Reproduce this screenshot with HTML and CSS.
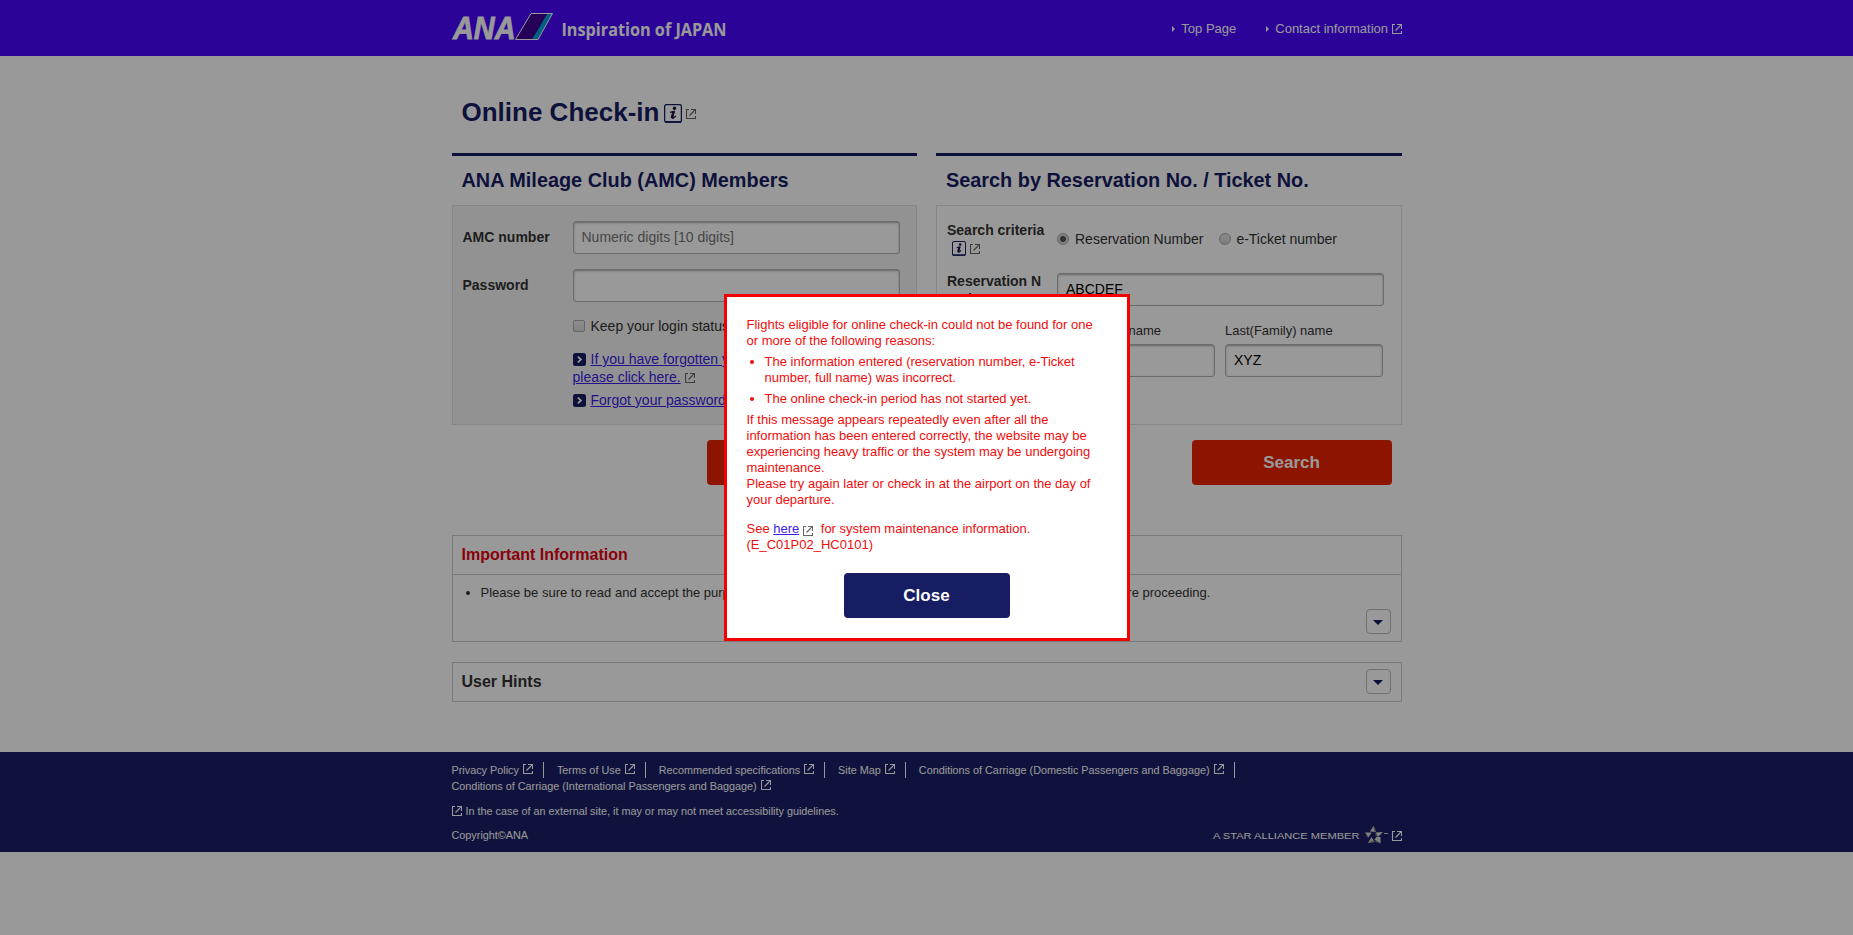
FILE: index.html
```html
<!DOCTYPE html>
<html lang="en">
<head>
<meta charset="utf-8">
<title>Online Check-in</title>
<link rel="stylesheet" href="styles.css">
</head>
<body>
<svg class="defs" width="0" height="0">
  <symbol id="ext" viewBox="0 0 10 10"><path d="M3 .5H.5v9h9V7M5 .5h4.5V5M3.5 6.5L9 1" fill="none" stroke="currentColor" stroke-width="1.15"/></symbol>
  <symbol id="chev" viewBox="0 0 13 13"><rect width="13" height="13" rx="2.500" fill="#171d63"/><path d="M4.800 3.600L8 6.500 4.800 9.400" fill="none" stroke="#fff" stroke-width="1.700"/></symbol>
  <symbol id="info" viewBox="0 0 18 19"><rect x=".6" y=".6" width="16.800" height="17.600" rx="2" fill="none" stroke="#171d63" stroke-width="1.300"/><path d="M1 17.900h16" stroke="#171d63" stroke-width="1.800"/><circle cx="10.500" cy="4.300" r="1.700" fill="#1b0f45"/><path d="M6 8.400L10.100 7.400 8.200 13.400Q8 14.800 9.400 14L11.800 12" fill="none" stroke="#1b0f45" stroke-width="1.300"/><path d="M9.700 7.300L7.800 14" stroke="#1b0f45" stroke-width="2.600"/></symbol>
</svg>
<header class="top">
  <div class="wrap top-row">
    <svg class="logo" width="280" height="56" viewBox="0 0 280 56">
      <text class="logo-ana" x="1" y="39" textLength="62.500" lengthAdjust="spacingAndGlyphs">ANA</text>
      <path d="M79 13.500H100.500L86 39.500H63.500z" fill="#3c0090"/>
      <path d="M95.500 13.500H100.500L86 39.500H80z" fill="#00a0dc"/>
      <path d="M79 13.500H100.500L86 39.500H63.500z" fill="none" stroke="#fff"/>
      <text class="logo-tag" x="109.500" y="36" textLength="165" lengthAdjust="spacingAndGlyphs">Inspiration of JAPAN</text>
    </svg>
    <nav class="top-nav">
      <a><i class="tri"></i>Top Page</a>
      <a><i class="tri"></i>Contact information<svg class="ext"><use href="#ext"/></svg></a>
    </nav>
  </div>
</header>
<main class="wrap">
  <h1>Online Check-in<svg class="info-lg"><use href="#info"/></svg><svg class="ext"><use href="#ext"/></svg></h1>
  <div class="cards">
    <section class="card">
      <h2>ANA Mileage Club (AMC) Members</h2>
      <div class="panel gray">
        <div class="row"><b class="label up">AMC number</b><div class="input ph">Numeric digits [10 digits]</div></div>
        <div class="row"><b class="label up">Password</b><div class="input"></div></div>
        <div class="indent">
          <div class="check"><i class="box"></i>Keep your login status</div>
          <p class="link"><svg class="chev"><use href="#chev"/></svg><a>If you have forgotten your AMC number,<br>please click here.</a><svg class="ext"><use href="#ext"/></svg></p>
          <p class="link"><svg class="chev"><use href="#chev"/></svg><a>Forgot your password?</a></p>
        </div>
      </div>
      <div class="btn">Log in</div>
    </section>
    <section class="card">
      <h2>Search by Reservation No. / Ticket No.</h2>
      <div class="panel">
        <div class="row"><b class="label">Search criteria<br><svg class="info-sm"><use href="#info"/></svg><svg class="ext"><use href="#ext"/></svg></b>
          <span class="radio"><i class="dot on"></i>Reservation Number</span><span class="radio"><i class="dot"></i>e-Ticket number</span></div>
        <div class="row res"><b class="label break">Reservation Number</b><div class="input">ABCDEF</div></div>
        <div class="row names"><b class="label">Name</b>
          <div class="field"><span>First(Given) name</span><div class="input"></div></div>
          <div class="field"><span>Last(Family) name</span><div class="input">XYZ</div></div></div>
      </div>
      <div class="btn">Search</div>
    </section>
  </div>
  <section class="notice">
    <h3 class="red">Important Information</h3>
    <div class="notice-body">
      <ul><li>Please be sure to read and accept the purpose of using personal information and handling of it on this page before proceeding.</li></ul>
      <span class="toggle"></span>
    </div>
  </section>
  <section class="notice hints"><h3>User Hints</h3><span class="toggle"></span></section>
</main>
<footer class="foot">
  <div class="wrap">
    <div class="foot-links">
      <a>Privacy Policy<svg class="ext"><use href="#ext"/></svg></a><a>Terms of Use<svg class="ext"><use href="#ext"/></svg></a><a>Recommended specifications<svg class="ext"><use href="#ext"/></svg></a><a>Site Map<svg class="ext"><use href="#ext"/></svg></a><a>Conditions of Carriage (Domestic Passengers and Baggage)<svg class="ext"><use href="#ext"/></svg></a><a class="last">Conditions of Carriage (International Passengers and Baggage)<svg class="ext"><use href="#ext"/></svg></a>
    </div>
    <p class="ext-note"><svg class="ext"><use href="#ext"/></svg>In the case of an external site, it may or may not meet accessibility guidelines.</p>
    <div class="foot-end"><span>Copyright©ANA</span>
      <svg class="star" width="190" height="18" viewBox="0 0 190 18">
        <text class="star-text" x="1" y="13" textLength="146.500" lengthAdjust="spacingAndGlyphs">A STAR ALLIANCE MEMBER</text>
        <g fill="#d8d8d2"><path d="M161.500 0L158 5.500 164 6z"/><path d="M153 6.500H159.500L156.500 11.500z"/><path d="M163.500 6.500L171 6 166 11z"/><path d="M159.500 11L156 17 162.500 16z"/><path d="M164.500 11H168.500V17.500L162.500 13.500z"/></g>
        <g fill="#85857f"><path d="M161.500 0L164 6 162 5.500z"/><path d="M153 6.500L156.500 11.500 155 11z"/><path d="M163.500 6.500L166 11 163.500 9.500z"/><path d="M156 17L162.500 16 160 14.500z"/><path d="M168.500 17.500L162.500 13.500 164 16z"/></g>
        <path d="M172 7.500h4" stroke="#ccc"/>
        <path d="M183 5.500H180.500v9h9v-2.500M185 5.500h4.500v4.500M183.500 11.500L189 6" fill="none" stroke="#fff" stroke-width="1.150"/>
      </svg>
    </div>
  </div>
</footer>
<div class="overlay">
  <div class="modal">
    <p>Flights eligible for online check-in could not be found for one or more of the following reasons:</p>
    <ul><li>The information entered (reservation number, e-Ticket number, full name) was incorrect.</li><li>The online check-in period has not started yet.</li></ul>
    <p>If this message appears repeatedly even after all the information has been entered correctly, the website may be experiencing heavy traffic or the system may be undergoing maintenance.<br>Please try again later or check in at the airport on the day of your departure.</p>
    <p class="see">See <a>here</a><svg class="ext"><use href="#ext"/></svg>for system maintenance information.<br>(E_C01P02_HC0101)</p>
    <div class="close">Close</div>
  </div>
</div>
</body>
</html>
```
FILE: styles.css
```css
* { box-sizing: border-box; }
body { margin: 0; background: #fff; color: #333; font: 14px/18px "Liberation Sans", Arial, sans-serif; }
h1, h2, h3, p, ul { margin: 0; padding: 0; }
.defs { display: block; }
.wrap { width: 950px; margin: 0 auto; }
.ext { width: 10px; height: 10px; color: #666; }

.top { background: #4906ff; height: 56px; color: #fff; font-size: 13px; }
.top-row { display: flex; justify-content: space-between; }
.logo { display: block; overflow: visible; }
.logo-ana { font: italic bold 31px "Liberation Sans", Arial, sans-serif; fill: #fff; stroke: #fff; stroke-width: .8px; }
.logo-tag { font: 700 18px "Open Sans", sans-serif; fill: #fff; }
.top-nav { display: flex; gap: 30px; height: 58px; align-items: center; }
.top-nav a { display: flex; align-items: center; }
.top-nav .ext { color: #fff; margin: 0 0 0 3.500px; }
.tri { border-left: 3px solid #fff; border-top: 3px solid transparent; border-bottom: 3px solid transparent; margin-right: 6px; }

h1 { height: 97px; padding: 41px 0 0 10px; font-size: 26px; line-height: 30px; color: #171d63; }
h1 .ext { margin-left: 4px; vertical-align: 2px; }
.info-lg { width: 18px; height: 19px; margin-left: 4.500px; vertical-align: -2px; }
.info-sm { width: 14px; height: 15px; margin: 0 4px 0 5px; vertical-align: -3px; }
.cards { display: flex; gap: 19px; }
.card { width: 465.500px; border-top: 3px solid #171d63; }
h2 { padding: 12px 10px 13px; font-size: 19.880px; line-height: 24px; color: #171d63; }
.panel { height: 220px; border: 1px solid #dfdfdf; padding: 15px 10px; }
.gray { background: #f3f3f3; }
.row { display: flex; align-items: center; margin-bottom: 15px; }
.label { width: 110px; flex: none; }
.up { padding-bottom: 2px; }
.label .ext { vertical-align: -1px; }
.break { word-break: break-all; padding-right: 10px; }
.input { width: 327px; height: 33px; border: 1px solid #b5b5b5; border-radius: 3px; background: #fff; box-shadow: inset 0 1px 2px #aaa; padding: 6px 8px; color: #000; }
.ph { color: #757575; }
.res .input { margin-bottom: 1px; }
.indent { margin-left: 110px; white-space: nowrap; }
.check { display: flex; align-items: center; margin-bottom: 15px; }
.box { width: 12px; height: 12px; margin-right: 6px; border: 1px solid #aaa; border-radius: 2px; background: linear-gradient(#eee, #d8d8d8); }
.link { margin-bottom: 5px; overflow: hidden; }
.link a, .see a { color: #3a1de4; text-decoration: underline; }
.link .ext { margin-left: 4px; vertical-align: -1px; }
.chev { width: 13px; height: 13px; margin-right: 5px; vertical-align: -2px; }
.radio { display: flex; align-items: center; margin-right: 16px; }
.dot { width: 12px; height: 12px; margin-right: 6px; border: 1px solid #aaa; border-radius: 50%; background: linear-gradient(#e8e8e8, #d0d0d0); }
.radio + .radio .dot { margin-right: 5px; }
.on { background: radial-gradient(circle, #555 0 2.600px, #d8d8d8 3.400px); }
.names { align-items: flex-start; }
.field { width: 158px; margin-right: 10px; font-size: 13px; line-height: 16px; }
.field .input { width: 158px; margin-top: 5px; font-size: 14px; line-height: 18px; }
.btn { width: 200px; height: 45px; margin: 15px 10px 0 auto; border-radius: 4px; background: #eb2300; color: #fff; font: bold 17px/45px "Liberation Sans", Arial, sans-serif; text-align: center; }

.notice { margin-top: 50px; border: 1px solid #ccc; }
.notice h3 { padding: 10px 9px; font-size: 16px; line-height: 18px; }
.notice .red { color: #e60012; border-bottom: 1px solid #ccc; }
.notice-body { height: 66px; padding: 10px 10px 0 28px; font-size: 13px; line-height: 16px; }
.notice-body li { white-space: nowrap; }
.toggle { display: flex; align-items: center; justify-content: center; width: 25px; height: 25px; border: 1px solid #bbb; border-radius: 4px; }
.toggle::after { content: ""; border-top: 5px solid #171d63; border-left: 5px solid transparent; border-right: 5px solid transparent; margin-top: 1px; }
.notice-body .toggle { margin: 8px 0 0 auto; }
.hints { margin-top: 20px; height: 40px; display: flex; justify-content: space-between; padding-right: 10px; }
.hints .toggle { margin-top: 6px; }

.foot { margin-top: 50px; height: 100px; background: #1a1e66; color: #fff; font-size: 10.830px; line-height: 16px; padding-top: 10px; }
.foot .ext { color: #fff; }
.foot-links { display: flex; flex-wrap: wrap; }
.foot-links a { display: flex; align-items: center; height: 16px; line-height: 14px; padding-right: 10px; border-right: 1px solid #fff; margin-right: 13px; padding-bottom: 1px; }
.foot-links a.last { border: 0; }
.foot-links .ext { margin-left: 4px; margin-top: -1px; }
.ext-note { margin-top: 9px; display: flex; align-items: center; }
.ext-note .ext { margin-right: 4px; }
.foot-end { display: flex; justify-content: space-between; margin-top: 7px; height: 18px; line-height: 18px; }
.star { display: block; }
.star-text { font: 9.500px "Liberation Sans", Arial, sans-serif; fill: #fff; }

.overlay { position: fixed; inset: 0; background: rgba(0, 0, 0, .4); display: flex; align-items: center; justify-content: center; }
.modal { width: 406px; height: 347px; border: 3px solid #f40000; background: #fff; padding: 20px 30px 0 20px; color: #f00c0c; font-size: 13px; line-height: 16px; }
.modal ul { margin: 5px 0; padding-left: 18px; }
.modal li { margin-bottom: 5px; }
.see { margin-top: 13px; }
.see .ext { margin: 0 7.500px 0 4px; vertical-align: -3px; }
.close { width: 166px; height: 45px; margin: 20px 0 0 97px; border-radius: 4px; background: #171d63; color: #fff; font: bold 17px/45px "Liberation Sans", Arial, sans-serif; text-align: center; }
```
